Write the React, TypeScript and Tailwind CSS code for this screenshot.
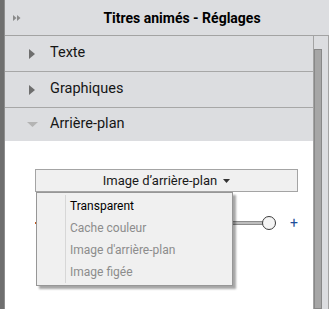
import React from "react";

function RightTri() {
  return (
    <svg width="6" height="10" viewBox="0 0 6 10" className="shrink-0">
      <polygon points="0,0 6,5 0,10" fill="#6e6e6e" />
    </svg>
  );
}

function Row({ label, last }: { label: string; last?: boolean }) {
  return (
    <div
      className={
        "flex items-center h-[36px] bg-[#dcdde0] pl-[24px] " +
        (last ? "" : "border-b border-[#a7a7a7]")
      }
    >
      <RightTri />
      <span className="ml-[15px] text-[14.5px] text-[#161616] leading-none">{label}</span>
    </div>
  );
}

export default function App() {
  return (
    <div className="w-[329px] h-[309px] flex overflow-hidden bg-white font-['Roboto',sans-serif]">
      <div className="w-[5px] h-full bg-[#6f6f6f] border-r border-[#8e8e8e] shrink-0" />
      <div className="flex-1 flex flex-col min-w-0">
        <div className="h-[36px] shrink-0 flex items-center bg-[#dcdde0] border-b border-[#a3a3a3]">
          <div className="w-[30px] pl-[8px] flex items-center">
            <svg width="8" height="6" viewBox="0 0 8 6">
              <polygon points="0,0 3.5,3 0,6" fill="#8a8a8a" />
              <polygon points="4,0 7.5,3 4,6" fill="#8a8a8a" />
            </svg>
          </div>
          <div className="flex-1 text-center text-[14px] font-bold text-black leading-none">
            Titres animés - Réglages
          </div>
        </div>
        <div className="flex-1 flex min-h-0">
          <div className="flex-1 flex flex-col min-w-0">
            <Row label="Texte" />
            <Row label="Graphiques" />
            <div className="flex items-center h-[33px] bg-[#dcdde0] pl-[22px]">
              <svg width="11" height="5" viewBox="0 0 11 5" className="shrink-0">
                <polygon points="0,0 11,0 5.5,5" fill="#b4b4b4" />
              </svg>
              <span className="ml-[12px] text-[14.5px] text-[#161616] leading-none">Arrière-plan</span>
            </div>
            <div className="flex-1 bg-white pt-[28px] pl-[30px] pr-[15px]">
              <div className="relative">
                <div className="h-[23px] bg-[#f0f0f0] border border-[#a4a4a4] flex items-center justify-center gap-[6px] text-[13px] text-[#1a1a1a] leading-none">
                  <span>Image d’arrière-plan</span>
                  <svg width="7" height="4" viewBox="0 0 7 4">
                    <polygon points="0,0 7,0 3.5,4" fill="#333" />
                  </svg>
                </div>
                <div className="mt-[23px] h-[16px] flex items-center">
                  <span className="w-[6px] h-[2px] bg-[#c05a20]" />
                  <div className="flex-1 h-[4px] bg-[#bdbdbd] border-y border-[#8c8c8c] ml-[4px]" />
                  <div className="w-[14px] h-[14px] rounded-full bg-[#f4f4f4] border border-[#3c3c3c] -ml-[1px]" />
                  <span className="ml-[14px] text-[14px] leading-none text-[#1f4f9a]">+</span>
                </div>
                <div className="absolute left-[1px] top-[23px] w-[197px] h-[94px] bg-[#f0f0f0] border border-[#979797] shadow-[3px_3px_2px_rgba(0,0,0,0.35)] flex">
                  <div className="w-[29px] shrink-0 py-[2px]">
                    <div className="h-full w-full border-r border-[#d7d7d7]" />
                  </div>
                  <div className="flex-1 flex flex-col pl-[4px] pt-[2px] text-[12px] leading-none">
                    <div className="h-[22px] flex items-center text-black">Transparent</div>
                    <div className="h-[22px] flex items-center text-[#8c8c8c]">Cache couleur</div>
                    <div className="h-[22px] flex items-center text-[#8c8c8c]">Image d'arrière-plan</div>
                    <div className="h-[22px] flex items-center text-[#8c8c8c]">Image figée</div>
                  </div>
                </div>
              </div>
            </div>
          </div>
          <div className="w-[16px] shrink-0 border-l border-r border-[#a3a3a3] bg-[#dcdde0] flex pt-[13px]">
            <div className="w-[8px] h-full bg-[#a6a6a6] border border-[#888888]" />
          </div>
        </div>
      </div>
    </div>
  );
}
